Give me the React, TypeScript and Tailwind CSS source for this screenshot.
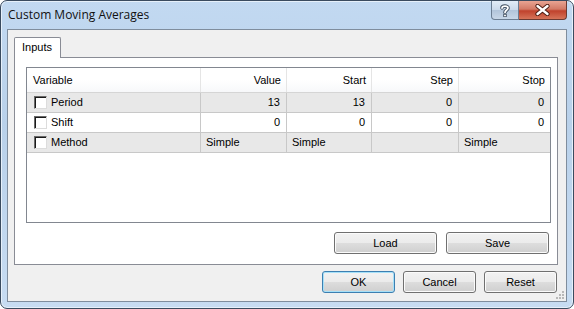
import React from "react";

const rows = [
  { name: "Period", cells: ["13", "13", "0", "0"], gray: true, numeric: true },
  { name: "Shift", cells: ["0", "0", "0", "0"], gray: false, numeric: true },
  { name: "Method", cells: ["Simple", "Simple", "", "Simple"], gray: true, numeric: false },
];

function WinButton({ label, wide, primary }: { label: string; wide?: boolean; primary?: boolean }) {
  return (
    <button
      className={`${wide ? "w-[103px]" : "w-[73px]"} h-[22px] rounded-[3px] border ${
        primary ? "border-[#3c7fb1] shadow-[inset_0_0_0_1px_#a6e0f8]" : "border-[#707070] shadow-[inset_0_0_0_1px_#fbfbfb]"
      } bg-[linear-gradient(#f2f2f2_0%,#ebebeb_50%,#dddddd_51%,#cfcfcf_100%)] text-[11px] text-black leading-none`}
    >
      {label}
    </button>
  );
}

function CheckBox() {
  return (
    <span className="w-[13px] h-[13px] shrink-0 bg-white border border-t-[#6a6a6a] border-l-[#6a6a6a] border-r-[#dcdcdc] border-b-[#dcdcdc] shadow-[inset_1px_1px_0_#1a1a1a]" />
  );
}

export default function App() {
  return (
    <div className="w-[574px] h-[309px] bg-white" style={{ fontFamily: '"Liberation Sans", Arial, sans-serif' }}>
      <div className="w-full h-full flex flex-col rounded-[7px] border border-[#3a4b5f] bg-[linear-gradient(#c2d9f1,#b9d1ea_40%,#c7dcf2)] px-[6px] pb-[6px] shadow-[inset_0_0_0_1px_#e6f0fa]">
        <div className="h-[28px] flex items-start justify-between">
          <span
            className="pt-[5px] pl-[1px] text-[12px] text-[#111]"
            style={{ fontFamily: '"Open Sans", "Noto Sans", sans-serif' }}
          >
            Custom Moving Averages
          </span>
          <div className="flex">
            <div className="w-[28px] h-[19px] flex items-center justify-center rounded-bl-[4px] border border-t-0 border-[#6b7d92] bg-[linear-gradient(#e2ecf7,#cad9ea_50%,#b1c4da_51%,#c8d7e8)]">
              <svg width="10" height="13" viewBox="0 0 10 13">
                <path
                  d="M2 4 C2 1.5 8 1.5 8 4 C8 6 5 6 5 8.5"
                  fill="none"
                  stroke="#3c4a5c"
                  strokeWidth="3.6"
                  strokeLinecap="round"
                />
                <path
                  d="M2 4 C2 1.5 8 1.5 8 4 C8 6 5 6 5 8.5"
                  fill="none"
                  stroke="#ffffff"
                  strokeWidth="1.8"
                  strokeLinecap="round"
                />
                <rect x="3.3" y="10" width="3.4" height="3" fill="#3c4a5c" />
                <rect x="4.1" y="10.7" width="1.8" height="1.6" fill="#ffffff" />
              </svg>
            </div>
            <div className="w-[48px] h-[19px] flex items-center justify-center rounded-br-[4px] border border-t-0 border-l-0 border-[#6b3a32] bg-[linear-gradient(#e8a493,#d27a66_45%,#c0422d_55%,#d67459)]">
              <svg width="15" height="12" viewBox="0 0 15 12">
                <path d="M2.5 2 L12.5 10 M12.5 2 L2.5 10" stroke="#4a1a10" strokeWidth="4.2" strokeLinecap="round" />
                <path d="M2.5 2 L12.5 10 M12.5 2 L2.5 10" stroke="#ffffff" strokeWidth="2.4" strokeLinecap="round" />
              </svg>
            </div>
          </div>
        </div>

        <div className="relative flex-1 flex flex-col border border-[#7f8d9d] bg-[#f0f0f0] pt-[7px] pl-[6px] pr-[8px] pb-[8px]">
          <div className="flex">
            <div className="h-[21px] w-[47px] mb-[-1px] z-10 flex items-center pl-[7px] pb-[1px] border border-b-0 border-[#898c95] rounded-t-[2px] bg-white text-[11px] text-black">
              Inputs
            </div>
          </div>
          <div className="h-[208px] flex flex-col border border-[#898c95] bg-white pt-[9px] pl-[11px] pr-[6px]">
            <div className="h-[156px] border border-[#828790] bg-white flex flex-col text-[11px] text-black">
              <div className="grid grid-cols-[174px_86px_85px_87px_91px] h-[25px] border-b border-[#d5d5d5] bg-[linear-gradient(#ffffff,#ffffff_50%,#f7f8fa)]">
                {["Variable", "Value", "Start", "Step", "Stop"].map((h, i) => (
                  <div
                    key={h}
                    className={`flex items-center ${i === 0 ? "pl-[6px]" : "justify-end pr-[5px]"} ${i < 4 ? "border-r border-[#e5e5e5]" : ""}`}
                  >
                    {h}
                  </div>
                ))}
              </div>
              {rows.map((r) => (
                <div
                  key={r.name}
                  className={`grid grid-cols-[174px_86px_85px_87px_91px] h-[20px] border-b border-[#c8c8c8] ${r.gray ? "bg-[#e8e8e8]" : "bg-white"}`}
                >
                  <div className="flex items-center gap-[4px] pl-[7px] border-r border-[#c8c8c8]">
                    <CheckBox />
                    <span>{r.name}</span>
                  </div>
                  {r.cells.map((c, i) => (
                    <div
                      key={i}
                      className={`flex items-center ${r.numeric ? "justify-end pr-[6px]" : "pl-[5px]"} ${i < 3 ? "border-r border-[#c8c8c8]" : ""}`}
                    >
                      {c}
                    </div>
                  ))}
                </div>
              ))}
            </div>
            <div className="flex justify-end gap-[9px] mt-[9px] pr-[2px]">
              <WinButton label="Load" wide />
              <WinButton label="Save" wide />
            </div>
          </div>
          <div className="flex justify-end gap-[8px] mt-[6px] pr-[1px]">
            <WinButton label="OK" primary />
            <WinButton label="Cancel" />
            <WinButton label="Reset" />
          </div>
          <svg className="absolute right-[1px] bottom-[1px]" width="10" height="10" viewBox="0 0 10 10">
            {[
              [7, 1],
              [4, 4],
              [7, 4],
              [1, 7],
              [4, 7],
              [7, 7],
            ].map(([x, y], i) => (
              <rect key={i} x={x} y={y} width="2" height="2" fill="#b8b8b8" />
            ))}
          </svg>
        </div>
      </div>
    </div>
  );
}
